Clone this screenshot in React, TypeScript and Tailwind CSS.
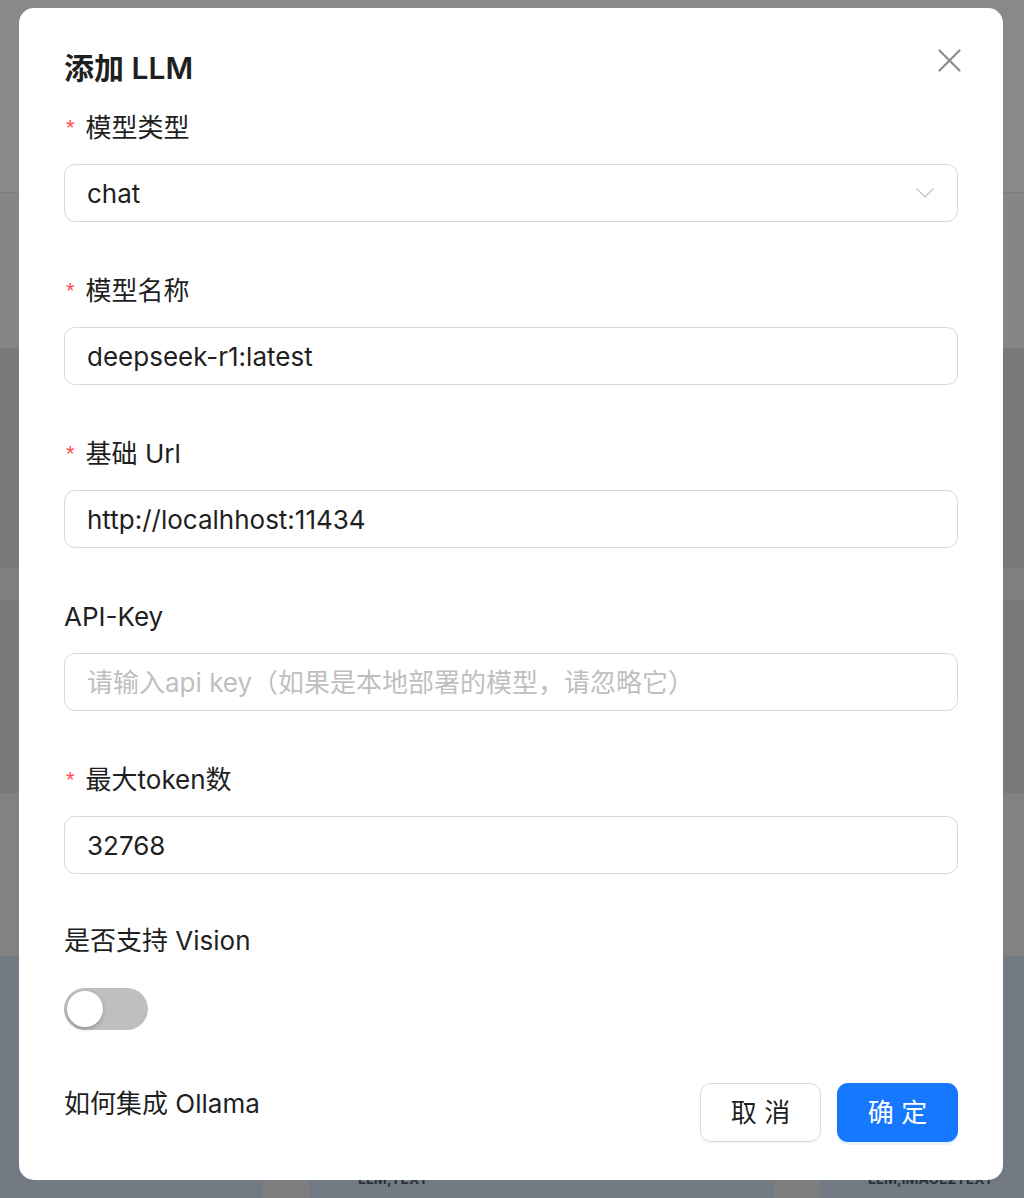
import React from "react";

function Label({ text, required }: { text: string; required?: boolean }) {
  return (
    <div className="flex h-[44px] items-center text-[26px] text-[#1f1f1f]">
      {required && (
        <span className="ml-[2px] mr-[11px] mt-[2px] font-['Liberation_Sans',sans-serif] text-[22px] leading-none text-[#ff4d4f]">*</span>
      )}
      <span>{text}</span>
    </div>
  );
}

function Field({
  label,
  required,
  value,
  placeholder,
  select,
  last,
}: {
  label: string;
  required?: boolean;
  value?: string;
  placeholder?: string;
  select?: boolean;
  last?: boolean;
}) {
  return (
    <div className={last ? "flex flex-col" : "flex flex-col mb-[46px]"}>
      <Label text={label} required={required} />
      <div className="mt-[15px] flex h-[58px] items-center justify-between rounded-[11px] border border-[#d9d9d9] bg-white pl-[22px] pr-[20px]">
        {value ? (
          <span className="text-[26px] text-[#1f1f1f]">{value}</span>
        ) : (
          <span className="text-[26px] text-[#bfbfbf]">{placeholder}</span>
        )}
        {select && (
          <svg width="20" height="14" viewBox="0 0 20 14" fill="none" className="mr-[2px]">
            <path d="M2 3 L10 11 L18 3" stroke="#c8c8c8" strokeWidth="1.5" strokeLinecap="round" strokeLinejoin="round" />
          </svg>
        )}
      </div>
    </div>
  );
}

export default function App() {
  return (
    <div className="relative h-[1198px] w-[1024px] overflow-hidden font-['Inter','Noto_Sans_CJK_SC',sans-serif]">
      {/* dimmed background page */}
      <div className="flex h-full w-full flex-col">
        <div className="h-[192px] bg-[#898989]" />
        <div className="h-[1px] bg-[#7b7b7b]" />
        <div className="h-[155px] bg-[#868686]" />
        <div className="h-[220px] bg-[#76787a]" />
        <div className="h-[32px] bg-[#7f7f7f]" />
        <div className="h-[193px] bg-[#77797b]" />
        <div className="h-[163px] bg-[#828282]" />
        <div className="flex flex-1 flex-col justify-end bg-[#747a83]">
          <div className="flex h-[22px] items-start text-[14px] font-bold leading-[16px] text-[#2b303a]">
            <div className="ml-[263px] h-[22px] w-[46px] bg-[#7e7e7e]" />
            <span className="ml-[49px] mt-[-5px]">LLM,TEXT</span>
            <div className="ml-[346px] h-[22px] w-[46px] bg-[#7e7e7e]" />
            <span className="ml-[48px] mt-[-5px]">LLM,IMAGE2TEXT</span>
          </div>
        </div>
      </div>

      {/* modal */}
      <div className="absolute inset-0 flex justify-start pl-[19px] pt-[8px]">
        <div className="relative h-[1172px] w-[984px] rounded-[15px] bg-white px-[45px] pt-[38px] pb-[38px]">
          <svg
            className="absolute right-[42px] top-[41px]"
            width="23"
            height="23"
            viewBox="0 0 23 23"
            fill="none"
          >
            <path d="M1.5 1.5 L21.5 21.5 M21.5 1.5 L1.5 21.5" stroke="#8c8c8c" strokeWidth="2.2" strokeLinecap="round" />
          </svg>

          <div className="flex h-[44px] items-center text-[30px] font-semibold text-[#1f1f1f]">添加 LLM</div>

          <div className="mt-[15px] flex flex-col">
            <Field label="模型类型" required value="chat" select />
            <Field label="模型名称" required value="deepseek-r1:latest" />
            <Field label="基础 Url" required value="http://localhhost:11434" />
            <Field label="API-Key" placeholder="请输入api key（如果是本地部署的模型，请忽略它）" />
            <Field label="最大token数" required value="32768" last />
          </div>

          <div className="mt-[44px] flex flex-col">
            <Label text="是否支持 Vision" />
            <div className="mt-[26px] flex h-[42px] w-[84px] items-center rounded-full bg-[#bfbfbf] px-[3px]">
              <div className="h-[36px] w-[36px] rounded-full bg-white shadow-[0_2px_4px_rgba(0,35,11,0.25)]" />
            </div>
          </div>

          <div className="mt-[53px] flex items-start justify-between">
            <div className="flex h-[40px] items-center text-[26px] text-[#1f1f1f]">如何集成 Ollama</div>
            <div className="flex gap-[16px]">
              <button className="flex h-[59px] w-[121px] items-center justify-center rounded-[11px] border border-[#d9d9d9] bg-white text-[26px] text-[#1f1f1f] shadow-[0_3px_0_rgba(0,0,0,0.02)]">
                取 消
              </button>
              <button className="flex h-[59px] w-[121px] items-center justify-center rounded-[11px] bg-[#1677ff] text-[26px] text-white shadow-[0_3px_0_rgba(5,145,255,0.1)]">
                确 定
              </button>
            </div>
          </div>
        </div>
      </div>
    </div>
  );
}
